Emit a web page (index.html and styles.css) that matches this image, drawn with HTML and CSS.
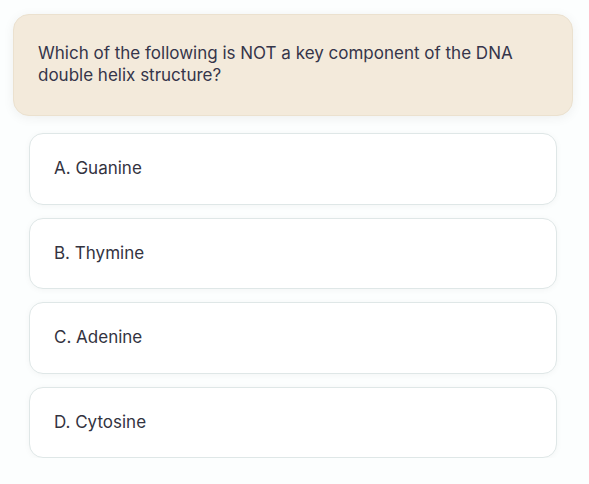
FILE: index.html
```html
<!DOCTYPE html>
<html>
<head>
<meta charset="utf-8">
<link rel="stylesheet" href="styles.css">
</head>
<body>
<div class="quiz">
  <div class="question">Which of the following is NOT a key component of the DNA double helix structure?</div>
  <div class="options">
    <div class="option">A. Guanine</div>
    <div class="option">B. Thymine</div>
    <div class="option">C. Adenine</div>
    <div class="option">D. Cytosine</div>
  </div>
</div>
</body>
</html>
```
FILE: styles.css
```css
html, body {
  margin: 0;
  padding: 0;
  background: #fcfefe;
}
body {
  font-family: "Inter", "Noto Sans", sans-serif;
  color: #33333f;
}
.quiz {
  padding: 14px 16px 0 13px;
}
.question {
  background: #f3eadb;
  border: 1px solid #ebe1cf;
  border-radius: 16px;
  padding: 27px 24px 29px 24px;
  font-size: 17px;
  line-height: 22px;
  color: #35354a;
  box-shadow: 0 2px 12px rgba(0, 0, 0, 0.06);
  width: 510px;
}
.options {
  display: flex;
  flex-direction: column;
  gap: 13px;
  margin: 17px 16px 0 16px;
}
.option {
  background: #ffffff;
  border: 1px solid #dfe7e7;
  border-radius: 14px;
  padding: 24px 24px;
  font-size: 17px;
  line-height: 21.5px;
  color: #33333f;
  box-shadow: 0 1px 6px rgba(0, 0, 0, 0.04);
}
```
